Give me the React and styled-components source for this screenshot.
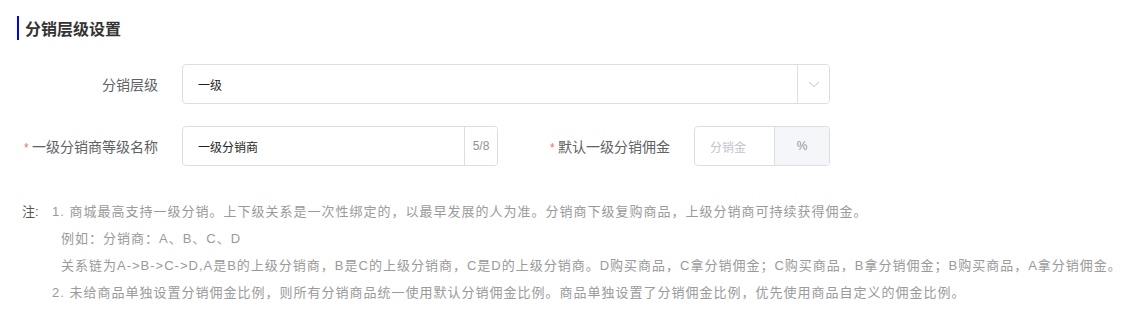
import React from "react";
import styled, { createGlobalStyle } from "styled-components";

const GlobalStyle = createGlobalStyle`
	body {
		margin: 0;
		background: #fff;
		font-family: "Liberation Sans", "Noto Sans CJK SC", sans-serif;
	}
`;

const Page = styled.div`
	width: 1140px;
	height: 317px;
	box-sizing: border-box;
	padding: 16px 8px 0 8px;
	overflow: hidden;
`;

const Title = styled.h2`
	margin: 0 0 24px 9px;
	height: 24px;
	display: flex;
	align-items: center;
	border-left: 2px solid #0000ff;
	padding-left: 6px;
	font-size: 16px;
	font-weight: 700;
	color: #333;
`;

const Row = styled.div`
	display: flex;
	align-items: center;
	height: 40px;
	margin-bottom: 22px;
`;

const Item = styled.div`
	display: flex;
	align-items: center;
	margin-left: ${(p) => p.$offset || 0}px;
`;

const Label = styled.label`
	width: 174px;
	box-sizing: border-box;
	padding-right: 24px;
	text-align: right;
	font-size: 14px;
	color: #606266;
	white-space: nowrap;

	&::before {
		content: ${(p) => (p.$required ? '"* "' : '""')};
		color: #f56c6c;
		font-size: 12px;
	}
`;

const Box = styled.div`
	display: flex;
	width: ${(p) => p.$width}px;
	height: 40px;
	box-sizing: border-box;
	border: 1px solid #dcdee2;
	border-radius: 4px;
	overflow: hidden;
	background: #fff;
`;

const Field = styled.div`
	flex: 1;
	display: flex;
	align-items: center;
	padding-left: 15px;
	font-size: 12px;
	color: ${(p) => (p.$placeholder ? "#c0c4cc" : "#1f1f1f")};
`;

const Addon = styled.div`
	width: ${(p) => p.$width}px;
	display: flex;
	align-items: center;
	justify-content: center;
	border-left: 1px solid #dcdee2;
	background: ${(p) => (p.$grey ? "#f5f6fa" : "#fff")};
	font-size: 12px;
	color: #909399;
`;

const Notes = styled.div`
	display: flex;
	margin-top: 38px;
	padding-left: 14px;
	font-size: 13px;
	color: #9a9a9a;
`;

const NoteTag = styled.span`
	color: #555;
	width: 30px;
	line-height: 16px;
`;

const NoteList = styled.div`
	display: flex;
	flex-direction: column;
	gap: 11px;
	letter-spacing: 1px;
`;

const NoteLine = styled.div`
	line-height: 16px;
	padding-left: ${(p) => p.$indent || 0}px;
	white-space: nowrap;
`;

function Chevron() {
	return (
		<svg width="14" height="14" viewBox="0 0 14 14">
			<path d="M2 5 L7 9.5 L12 5" fill="none" stroke="#c0c4cc" strokeWidth="1" />
		</svg>
	);
}

export default function App() {
	return (
		<Page>
			<GlobalStyle />
			<Title>分销层级设置</Title>
			<Row>
				<Item>
					<Label>分销层级</Label>
					<Box $width={648}>
						<Field>一级</Field>
						<Addon $width={31}>
							<Chevron />
						</Addon>
					</Box>
				</Item>
			</Row>
			<Row>
				<Item>
					<Label $required>一级分销商等级名称</Label>
					<Box $width={316}>
						<Field>一级分销商</Field>
						<Addon $width={32}>5/8</Addon>
					</Box>
				</Item>
				<Item $offset={22}>
					<Label $required>默认一级分销佣金</Label>
					<Box $width={136}>
						<Field $placeholder>分销金</Field>
						<Addon $width={54} $grey>
							%
						</Addon>
					</Box>
				</Item>
			</Row>
			<Notes>
				<NoteTag>注:</NoteTag>
				<NoteList>
					<NoteLine>1. 商城最高支持一级分销。上下级关系是一次性绑定的，以最早发展的人为准。分销商下级复购商品，上级分销商可持续获得佣金。</NoteLine>
					<NoteLine $indent={9}>例如：分销商：A、B、C、D</NoteLine>
					<NoteLine $indent={9}>关系链为A-&gt;B-&gt;C-&gt;D,A是B的上级分销商，B是C的上级分销商，C是D的上级分销商。D购买商品，C拿分销佣金；C购买商品，B拿分销佣金；B购买商品，A拿分销佣金。</NoteLine>
					<NoteLine>2. 未给商品单独设置分销佣金比例，则所有分销商品统一使用默认分销佣金比例。商品单独设置了分销佣金比例，优先使用商品自定义的佣金比例。</NoteLine>
				</NoteList>
			</Notes>
		</Page>
	);
}
